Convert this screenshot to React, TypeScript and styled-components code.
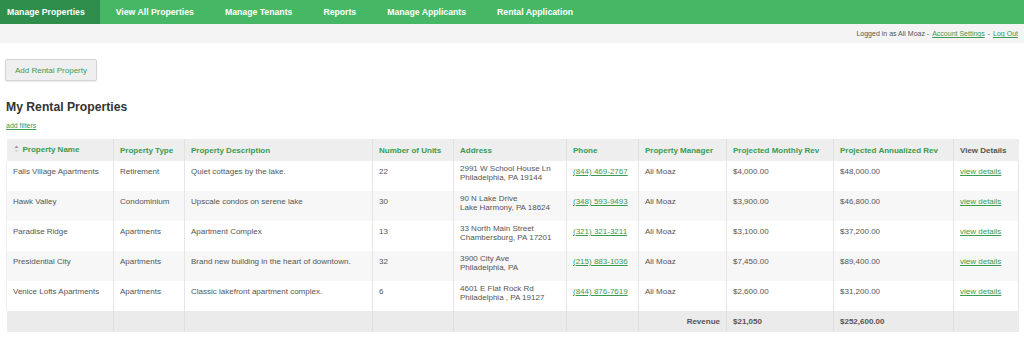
import styled, { createGlobalStyle } from "styled-components";

const GlobalStyle = createGlobalStyle`
  body {
    margin: 0;
    background: #fff;
    font-family: "Liberation Sans", Arial, sans-serif;
  }
`;

const NavBar = styled.nav`
  display: flex;
  height: 24px;
  background: #46b865;
`;

const NavItem = styled.a<{ $active?: boolean }>`
  display: flex;
  align-items: center;
  padding: 0 15px 0 ${(p) => (p.$active ? "7px" : "16px")};
  background: ${(p) => (p.$active ? "#2f8e4c" : "transparent")};
  color: #fff;
  font-size: 8.7px;
  font-weight: 700;
  text-decoration: none;
`;

const SubBar = styled.div`
  display: flex;
  justify-content: flex-end;
  align-items: center;
  height: 19px;
  padding-right: 6px;
  background: #f4f4f4;
  font-size: 7px;
  color: #555;
`;

const SubLink = styled.a<{ $last?: boolean }>`
  color: #3c9a52;
  text-decoration: underline;
  margin: ${(p) => (p.$last ? "0 0 0 3px" : "0 3px")};
`;

const Content = styled.main`
  padding: 16px 6px 0 6px;
`;

const AddButton = styled.button`
  display: block;
  width: 92px;
  height: 22px;
  margin-left: -1px;
  padding: 0;
  background: #efefef;
  border: 1px solid #d3d3d3;
  border-radius: 2px;
  box-shadow: 0 1px 1px rgba(0, 0, 0, 0.08);
  color: #3c9a52;
  font-family: "Liberation Sans", Arial, sans-serif;
  font-size: 8px;
`;

const Heading = styled.h2`
  margin: 19px 0 0 0;
  font-size: 12.2px;
  line-height: 14px;
  font-weight: 700;
  color: #333;
`;

const FilterLink = styled.a`
  display: block;
  margin-top: 8px;
  font-size: 7px;
  color: #3c9a52;
  text-decoration: underline;
`;

const Table = styled.table`
  margin-top: 10px;
  width: 1012px;
  table-layout: fixed;
  border-collapse: collapse;
  font-size: 8px;
  color: #555;
`;

const HeadCell = styled.th<{ $plain?: boolean }>`
  height: 22px;
  padding: 0 6px;
  text-align: left;
  font-weight: 700;
  color: ${(p) => (p.$plain ? "#555" : "#3a9a4e")};
  background: #eeeeee;
  border-left: 1px solid #e2e2e2;
  white-space: nowrap;
  &:first-child {
    border-left: none;
  }
`;

const SortWrap = styled.span`
  display: inline-flex;
  align-items: center;
  gap: 4px;
  margin-left: 1px;
`;

const Row = styled.tr<{ $striped?: boolean }>`
  height: 30px;
  background: ${(p) => (p.$striped ? "#f7f7f7" : "#fff")};
`;

const Cell = styled.td<{ $tight?: boolean }>`
  padding: ${(p) => (p.$tight ? "4px" : "6px")} 6px 0 6px;
  vertical-align: top;
  line-height: ${(p) => (p.$tight ? "8.8px" : "10px")};
  border-left: 1px solid #e6e6e6;
  white-space: nowrap;
  overflow: hidden;
  &:first-child {
    border-left: 1px solid #f0f0f0;
  }
  &:last-child {
    border-right: 1px solid #e6e6e6;
  }
`;

const CellLink = styled.a`
  color: #3c9a52;
  text-decoration: underline;
`;

const FootRow = styled.tr`
  height: 21px;
  background: #ebebeb;
`;

const FootCell = styled.td<{ $right?: boolean }>`
  padding: 0 6px;
  text-align: ${(p) => (p.$right ? "right" : "left")};
  font-weight: 700;
  color: #555;
  border-left: 1px solid #e0e0e0;
  &:first-child {
    border-left: none;
  }
`;

const SortIcon = () => (
  <svg width="5" height="8" viewBox="0 0 5 8">
    <path d="M2.5 0.5 L4.5 3 L0.5 3 Z" fill="#9a9a9a" />
    <path d="M2.5 7.5 L4.5 5 L0.5 5 Z" fill="#d0d0d0" />
  </svg>
);

const columns = [107, 71, 188, 81, 113, 72, 88, 107, 120, 65];

const properties = [
  {
    name: "Falls Village Apartments",
    type: "Retirement",
    desc: "Quiet cottages by the lake.",
    units: "22",
    addr1: "2991 W School House Ln",
    addr2: "Philadelphia, PA 19144",
    phone: "(844) 469-2767",
    monthly: "$4,000.00",
    annual: "$48,000.00",
  },
  {
    name: "Hawk Valley",
    type: "Condominium",
    desc: "Upscale condos on serene lake",
    units: "30",
    addr1: "90 N Lake Drive",
    addr2: "Lake Harmony, PA 18624",
    phone: "(348) 593-9493",
    monthly: "$3,900.00",
    annual: "$46,800.00",
  },
  {
    name: "Paradise Ridge",
    type: "Apartments",
    desc: "Apartment Complex",
    units: "13",
    addr1: "33 North Main Street",
    addr2: "Chambersburg, PA 17201",
    phone: "(321) 321-3211",
    monthly: "$3,100.00",
    annual: "$37,200.00",
  },
  {
    name: "Presidential City",
    type: "Apartments",
    desc: "Brand new building in the heart of downtown.",
    units: "32",
    addr1: "3900 City Ave",
    addr2: "Philadelphia, PA",
    phone: "(215) 883-1036",
    monthly: "$7,450.00",
    annual: "$89,400.00",
  },
  {
    name: "Venice Lofts Apartments",
    type: "Apartments",
    desc: "Classic lakefront apartment complex.",
    units: "6",
    addr1: "4601 E Flat Rock Rd",
    addr2: "Philadelphia , PA 19127",
    phone: "(844) 876-7619",
    monthly: "$2,600.00",
    annual: "$31,200.00",
  },
];

const navItems = [
  "Manage Properties",
  "View All Properties",
  "Manage Tenants",
  "Reports",
  "Manage Applicants",
  "Rental Application",
];

export default function App() {
  return (
    <>
      <GlobalStyle />
      <NavBar>
        {navItems.map((item, i) => (
          <NavItem key={item} href="#" $active={i === 0}>
            {item}
          </NavItem>
        ))}
      </NavBar>
      <SubBar>
        Logged in as Ali Moaz -<SubLink href="#">Account Settings</SubLink>-
        <SubLink href="#" $last>
          Log Out
        </SubLink>
      </SubBar>
      <Content>
        <AddButton>Add Rental Property</AddButton>
        <Heading>My Rental Properties</Heading>
        <FilterLink href="#">add filters</FilterLink>
        <Table>
          <colgroup>
            {columns.map((w, i) => (
              <col key={i} style={{ width: w }} />
            ))}
          </colgroup>
          <thead>
            <tr>
              <HeadCell>
                <SortWrap>
                  <SortIcon />
                  Property Name
                </SortWrap>
              </HeadCell>
              <HeadCell>Property Type</HeadCell>
              <HeadCell>Property Description</HeadCell>
              <HeadCell>Number of Units</HeadCell>
              <HeadCell>Address</HeadCell>
              <HeadCell>Phone</HeadCell>
              <HeadCell>Property Manager</HeadCell>
              <HeadCell>Projected Monthly Rev</HeadCell>
              <HeadCell>Projected Annualized Rev</HeadCell>
              <HeadCell $plain>View Details</HeadCell>
            </tr>
          </thead>
          <tbody>
            {properties.map((p, i) => (
              <Row key={p.name} $striped={i % 2 === 1}>
                <Cell>{p.name}</Cell>
                <Cell>{p.type}</Cell>
                <Cell>{p.desc}</Cell>
                <Cell>{p.units}</Cell>
                <Cell $tight>
                  {p.addr1}
                  <br />
                  {p.addr2}
                </Cell>
                <Cell>
                  <CellLink href="#">{p.phone}</CellLink>
                </Cell>
                <Cell>Ali Moaz</Cell>
                <Cell>{p.monthly}</Cell>
                <Cell>{p.annual}</Cell>
                <Cell>
                  <CellLink href="#">view details</CellLink>
                </Cell>
              </Row>
            ))}
            <FootRow>
              <FootCell />
              <FootCell />
              <FootCell />
              <FootCell />
              <FootCell />
              <FootCell />
              <FootCell $right>Revenue</FootCell>
              <FootCell>$21,050</FootCell>
              <FootCell>$252,600.00</FootCell>
              <FootCell />
            </FootRow>
          </tbody>
        </Table>
      </Content>
    </>
  );
}
